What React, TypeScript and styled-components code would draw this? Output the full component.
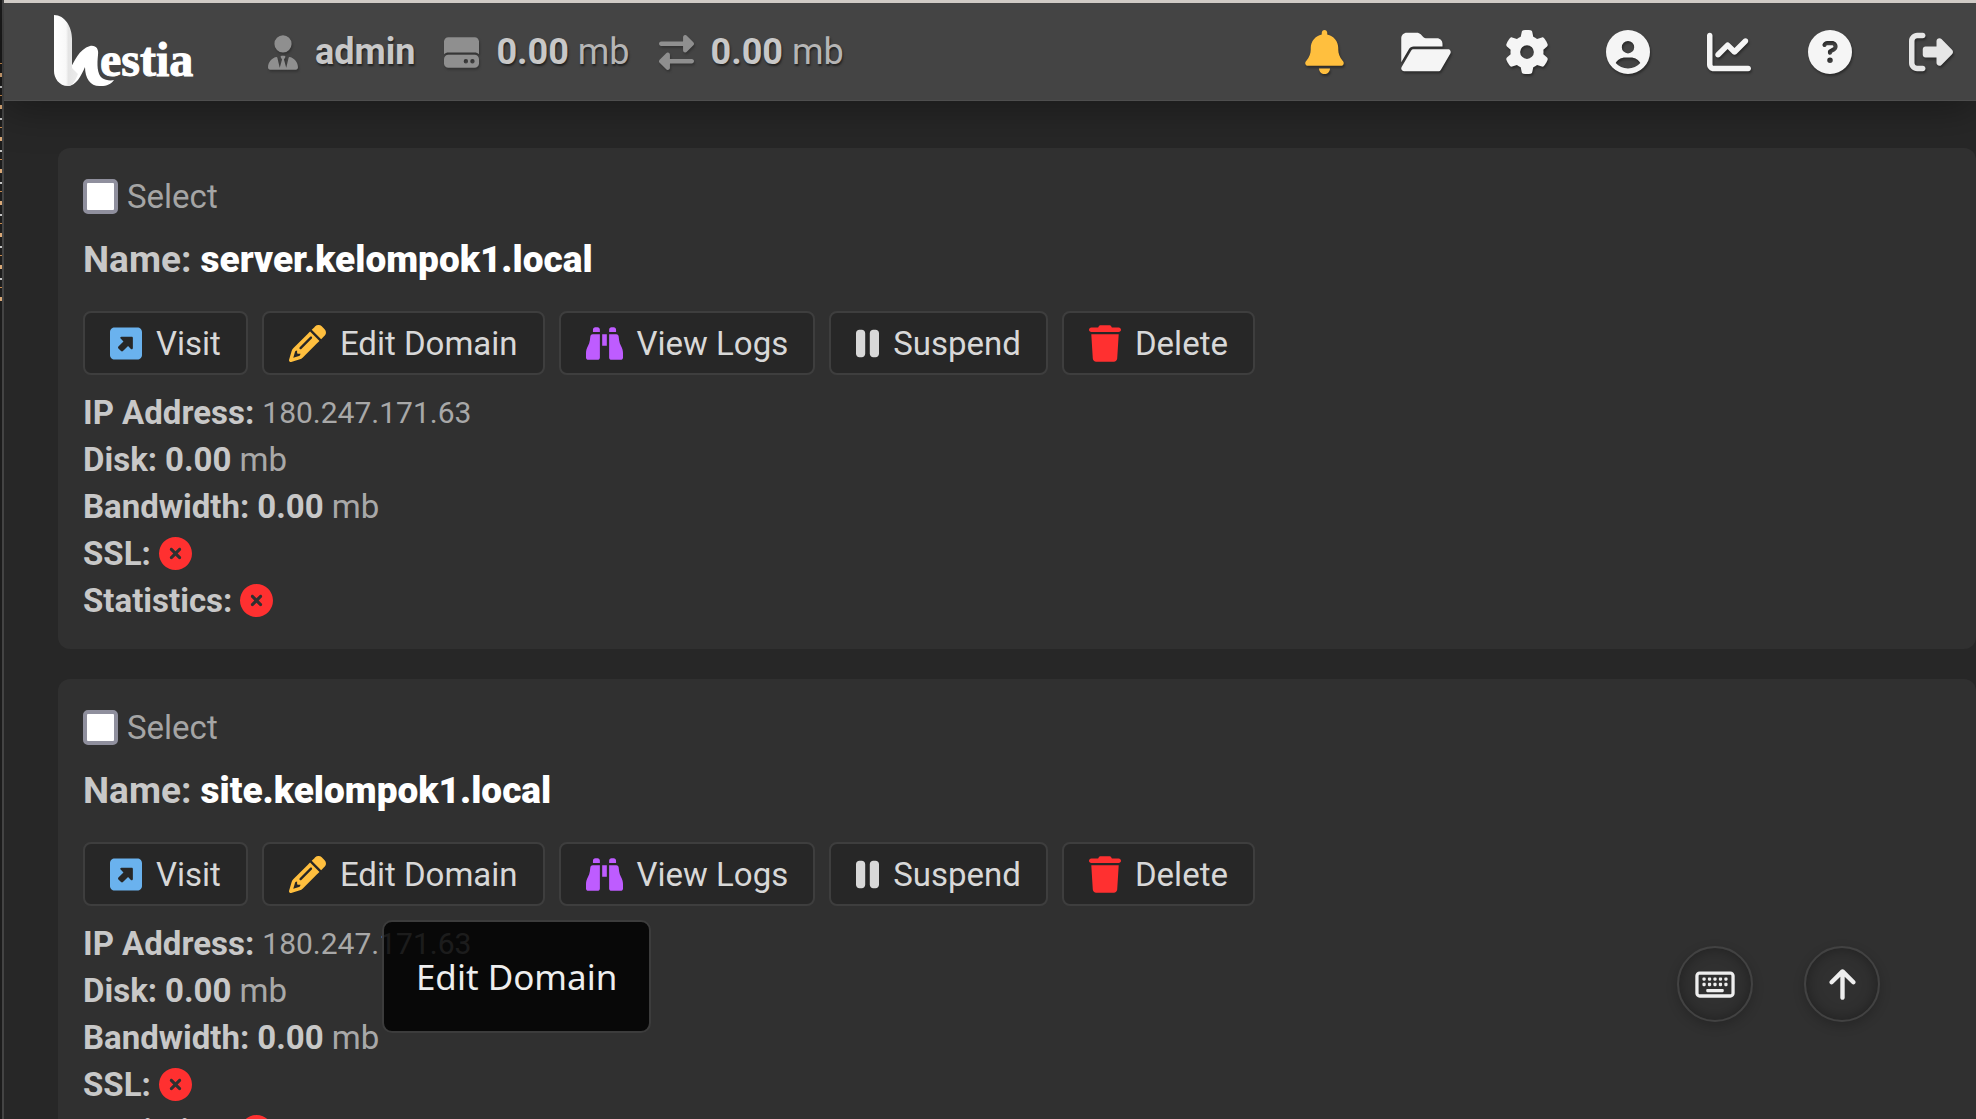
import React from "react";
import styled, { createGlobalStyle } from "styled-components";
import {
  FaArrowUp, FaBell, FaBinoculars, FaChartLine, FaCircleQuestion, FaCircleUser, FaCircleXmark,
  FaFolderOpen, FaGear, FaHardDrive, FaPause, FaPencil, FaRegKeyboard, FaRightFromBracket,
  FaRightLeft, FaSquareUpRight, FaTrash, FaUserTie,
} from "react-icons/fa6";

const GlobalStyle = createGlobalStyle`
  *, *::before, *::after { box-sizing: border-box; }
  html, body, #root { height: 100%; }
  body {
    margin: 0;
    overflow: hidden;
    background: #272727;
    color: #c8c8c8;
    font: 33px/47px Roboto, "Open Sans", sans-serif;
  }
  button, input { font: inherit; color: inherit; }
  a { text-decoration: none; }
  svg { display: block; flex: none; }
`;

const Shell = styled.div`
  display: flex;
  height: 100%;
  overflow: hidden;
`;

const WindowEdge = styled.div`
  flex: none;
  width: 4px;
  background: #1c1c1c;
  border-right: 2px solid #444;

  &::before {
    content: "";
    display: block;
    height: 248px;
    margin-top: 62px;
    background: repeating-linear-gradient(
      #1c1c1c 0 1px, #c98b4e 1px 2px, #1c1c1c 2px 11px,
      #d9a877 11px 15px, #1c1c1c 15px 24px, #c4c4c4 24px 26px, #1c1c1c 26px 32px
    );
  }
`;

const Panel = styled.div`
  flex: 1;
  min-width: 0;
  display: flex;
  flex-direction: column;
`;

const Icon = styled.span<{ $w: number; $h: number; $color?: string }>`
  flex: none;
  display: block;
  width: ${(p) => p.$w}px;
  height: ${(p) => p.$h}px;
  color: ${(p) => p.$color ?? "inherit"};
  svg { width: 100%; height: 100%; }
`;

const TopBar = styled.header`
  flex: none;
  display: flex;
  align-items: center;
  height: 101px;
  padding: 0 20px 0 50px;
  background: #444;
  border-top: 3px solid #d0cbc6;
  border-bottom: 1px solid #4e4e4e;
  box-shadow: 0 8px 40px rgba(0, 0, 0, 0.35);
`;

const Logo = styled.a`
  display: flex;
  align-items: flex-start;
  width: 138px;
  height: 76px;
  margin-right: 76px;
  color: #fff;
`;

const LogoText = styled.span`
  margin-left: -16px;
  padding-top: 16px;
  font: 700 48px/60px "Liberation Serif", serif;
  -webkit-text-stroke: 1px #fff;
`;

const Usage = styled.ul`
  display: flex;
  gap: 29px;
  margin: 0;
  padding: 2px 0 0;
  list-style: none;
  color: #b5b5b5;
  font-size: 36px;
  text-shadow: 1px 2px 2px #222;
`;

const UsageItem = styled.li`
  display: flex;
  align-items: center;
  gap: 17px;
  svg { color: #8f8f8f; filter: drop-shadow(1px 2px 1px #333); }
  b { color: #c8c8c8; }
`;

const Nav = styled.nav`
  display: flex;
  margin-left: auto;
`;

const NavLink = styled.a<{ $tone?: string }>`
  display: grid;
  place-items: center;
  width: 101px;
  height: 60px;
  color: ${(p) => p.$tone ?? "#f5f5f5"};
  svg { filter: drop-shadow(1px 2px 1px #2a2a2a); }
  &:last-child { width: 50px; margin-left: 26px; }
`;

const List = styled.main`
  display: flex;
  flex-direction: column;
  gap: 30px;
  padding: 47px 0 0 54px;
`;

const Card = styled.article`
  padding: 25px;
  background: #303030;
  border-radius: 12px;
`;

const SelectLabel = styled.label`
  display: flex;
  align-items: center;
  gap: 9px;
  color: #a5a5a5;
`;

const Check = styled.input`
  appearance: none;
  width: 35px;
  height: 35px;
  margin: 0;
  background: #fff;
  border: 4px solid #8f8f9d;
  border-radius: 5px;
`;

const Name = styled.h2`
  margin: 16px 0 28px;
  font-size: 37px;
  line-height: 47px;
  strong { color: #fff; }
`;

const Actions = styled.div`
  display: flex;
  gap: 14px;
  margin-bottom: 14px;
`;

const Action = styled.button`
  display: flex;
  align-items: center;
  gap: 14px;
  height: 64px;
  padding: 0 25px;
  background: #272727;
  border: 2px solid #3e3e3e;
  border-radius: 8px;
  color: #d8d8d8;
`;

const Facts = styled.dl`
  margin: 0;
`;

const Fact = styled.div`
  display: flex;
  align-items: center;
  gap: 8px;
  height: 47px;
  dt { font-weight: 700; }
  dd { margin: 0; color: #a8a8a8; }
  b { color: #c8c8c8; }
`;

const Address = styled.dd`
  font-size: 30px;
`;

const Anchor = styled.div`
  position: relative;
`;

const Tooltip = styled.span`
  position: absolute;
  z-index: 2;
  top: 78px;
  left: 120px;
  padding: 31px 32px;
  background: rgba(0, 0, 0, 0.83);
  border: 2px solid #3c3c3c;
  border-radius: 10px;
  color: #eee;
  font-family: "Noto Sans", sans-serif;
  font-size: 35px;
  white-space: nowrap;
`;

const Floating = styled.div`
  position: fixed;
  right: 96px;
  bottom: 97px;
  display: flex;
  gap: 51px;
`;

const RoundButton = styled.button`
  display: grid;
  place-items: center;
  width: 76px;
  height: 76px;
  padding: 0;
  background: #303030;
  border: 2px solid #424242;
  border-radius: 50%;
  box-shadow: inset 0 0 14px rgba(0, 0, 0, 0.35), 0 4px 12px rgba(0, 0, 0, 0.2);
  color: #eee;
`;

const domains = ["server.kelompok1.local", "site.kelompok1.local"];

function LogoMark() {
  return (
    <svg width="62" height="73" viewBox="0 0 62 73" aria-hidden="true">
      <defs>
        <linearGradient id="ribbon">
          <stop offset="0" stopColor="#fff" />
          <stop offset="0.5" stopColor="#f8f8f8" />
          <stop offset="0.6" stopColor="#e4e4e4" />
          <stop offset="1" stopColor="#ececec" />
        </linearGradient>
      </defs>
      <path
        fill="#fff"
        d="M15 57C20 48 25 35 36 32C42 31 45 35 44 41C43 50 43 60 48 64C51 66 56 67 60 66C57 70 53 72 47 72C37 73 31 65 31 53C27 62 22 72 14 72Z"
      />
      <path fill="url(#ribbon)" d="M0 1C11 1 18 13 18 25V54L24 60C21 68 18 72 14 72C5 72 0 64 0 57Z" />
    </svg>
  );
}

export default function App() {
  return (
    <Shell>
      <GlobalStyle />
      <WindowEdge />
      <Panel>
        <TopBar>
          <Logo href="#" aria-label="Hestia">
            <LogoMark />
            <LogoText>estia</LogoText>
          </Logo>
          <Usage>
            <UsageItem><Icon $w={30} $h={35}><FaUserTie /></Icon><b>admin</b></UsageItem>
            <UsageItem><Icon $w={35} $h={35}><FaHardDrive /></Icon><span><b>0.00</b> mb</span></UsageItem>
            <UsageItem><Icon $w={35} $h={35}><FaRightLeft /></Icon><span><b>0.00</b> mb</span></UsageItem>
          </Usage>
          <Nav aria-label="Main">
            <NavLink href="#" aria-label="Notifications" $tone="#ffbf3e"><Icon $w={39} $h={44}><FaBell /></Icon></NavLink>
            <NavLink href="#" aria-label="Files"><Icon $w={50} $h={44}><FaFolderOpen /></Icon></NavLink>
            <NavLink href="#" aria-label="Settings"><Icon $w={44} $h={44}><FaGear /></Icon></NavLink>
            <NavLink href="#" aria-label="Account"><Icon $w={44} $h={44}><FaCircleUser /></Icon></NavLink>
            <NavLink href="#" aria-label="Statistics"><Icon $w={44} $h={44}><FaChartLine /></Icon></NavLink>
            <NavLink href="#" aria-label="Help"><Icon $w={44} $h={44}><FaCircleQuestion /></Icon></NavLink>
            <NavLink href="#" aria-label="Log out" $tone="#e6e6e6"><Icon $w={44} $h={44}><FaRightFromBracket /></Icon></NavLink>
          </Nav>
        </TopBar>
        <List>
          {domains.map((domain, i) => (
            <Card key={domain}>
              <SelectLabel><Check type="checkbox" />Select</SelectLabel>
              <Name>Name: <strong>{domain}</strong></Name>
              <Actions>
                <Action><Icon $w={32} $h={37} $color="#6ab2ee"><FaSquareUpRight /></Icon>Visit</Action>
                <Anchor>
                  <Action><Icon $w={37} $h={37} $color="#ffbf3e"><FaPencil /></Icon>Edit Domain</Action>
                  {i === 1 && <Tooltip role="tooltip">Edit Domain</Tooltip>}
                </Anchor>
                <Action><Icon $w={37} $h={37} $color="#be5cff"><FaBinoculars /></Icon>View Logs</Action>
                <Action><Icon $w={23} $h={37}><FaPause /></Icon>Suspend</Action>
                <Action><Icon $w={32} $h={37} $color="#ff3030"><FaTrash /></Icon>Delete</Action>
              </Actions>
              <Facts>
                <Fact><dt>IP Address:</dt><Address>180.247.171.63</Address></Fact>
                <Fact><dt>Disk:</dt><dd><b>0.00</b> mb</dd></Fact>
                <Fact><dt>Bandwidth:</dt><dd><b>0.00</b> mb</dd></Fact>
                <Fact><dt>SSL:</dt><dd><Icon $w={33} $h={33} $color="#ff3030"><FaCircleXmark /></Icon></dd></Fact>
                <Fact><dt>Statistics:</dt><dd><Icon $w={33} $h={33} $color="#ff3030"><FaCircleXmark /></Icon></dd></Fact>
              </Facts>
            </Card>
          ))}
        </List>
      </Panel>
      <Floating>
        <RoundButton aria-label="Keyboard shortcuts"><Icon $w={40} $h={35}><FaRegKeyboard /></Icon></RoundButton>
        <RoundButton aria-label="Back to top"><Icon $w={27} $h={35}><FaArrowUp /></Icon></RoundButton>
      </Floating>
    </Shell>
  );
}
